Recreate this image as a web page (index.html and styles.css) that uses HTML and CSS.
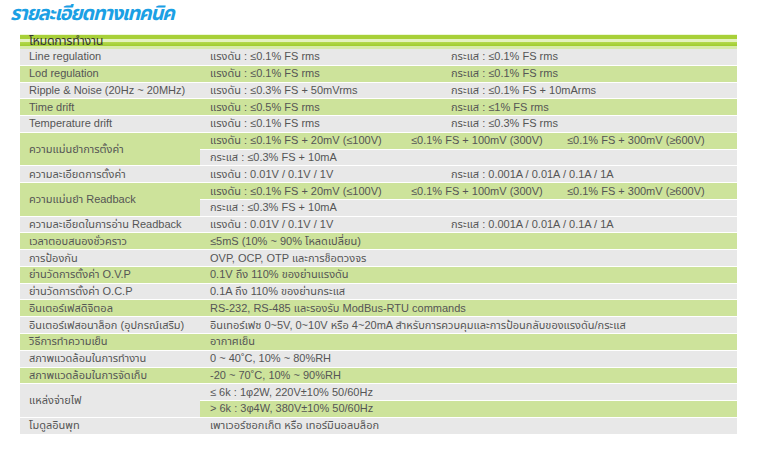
FILE: index.html
```html
<!DOCTYPE html>
<html lang="th">
<head>
<meta charset="utf-8">
<title>รายละเอียดทางเทคนิค</title>
<link rel="stylesheet" href="styles.css">
</head>
<body>
<h1 class="title">รายละเอียดทางเทคนิค</h1>
<div class="spec">
  <div class="head">โหมดการทำงาน</div>

  <div class="lbl w">Line regulation</div>
  <div class="val w"><span class="c1">แรงดัน : ≤0.1% FS rms</span><span>กระแส : ≤0.1% FS rms</span></div>

  <div class="lbl g">Lod regulation</div>
  <div class="val g"><span class="c1">แรงดัน : ≤0.1% FS rms</span><span>กระแส : ≤0.1% FS rms</span></div>

  <div class="lbl w">Ripple &amp; Noise (20Hz ~ 20MHz)</div>
  <div class="val w"><span class="c1">แรงดัน : ≤0.3% FS + 50mVrms</span><span>กระแส : ≤0.1% FS + 10mArms</span></div>

  <div class="lbl g">Time drift</div>
  <div class="val g"><span class="c1">แรงดัน : ≤0.5% FS rms</span><span>กระแส : ≤1% FS rms</span></div>

  <div class="lbl w">Temperature drift</div>
  <div class="val w"><span class="c1">แรงดัน : ≤0.1% FS rms</span><span>กระแส : ≤0.3% FS rms</span></div>

  <div class="lbl g span2">ความแม่นยำการตั้งค่า</div>
  <div class="val g"><span class="t1">แรงดัน : ≤0.1% FS + 20mV (≤100V)</span><span class="t2">≤0.1% FS + 100mV (300V)</span><span>≤0.1% FS + 300mV (≥600V)</span></div>
  <div class="val w">กระแส : ≤0.3% FS + 10mA</div>

  <div class="lbl w">ความละเอียดการตั้งค่า</div>
  <div class="val w"><span class="c1">แรงดัน : 0.01V / 0.1V / 1V</span><span>กระแส : 0.001A / 0.01A / 0.1A / 1A</span></div>

  <div class="lbl g span2">ความแม่นยำ Readback</div>
  <div class="val g"><span class="t1">แรงดัน : ≤0.1% FS + 20mV (≤100V)</span><span class="t2">≤0.1% FS + 100mV (300V)</span><span>≤0.1% FS + 300mV (≥600V)</span></div>
  <div class="val w">กระแส : ≤0.3% FS + 10mA</div>

  <div class="lbl w">ความละเอียดในการอ่าน Readback</div>
  <div class="val w"><span class="c1">แรงดัน : 0.01V / 0.1V / 1V</span><span>กระแส : 0.001A / 0.01A / 0.1A / 1A</span></div>

  <div class="lbl g">เวลาตอบสนองชั่วคราว</div>
  <div class="val g">≤5mS (10% ~ 90% โหลดเปลี่ยน)</div>

  <div class="lbl w">การป้องกัน</div>
  <div class="val w">OVP, OCP, OTP และการช็อตวงจร</div>

  <div class="lbl g">ย่านวัดการตั้งค่า O.V.P</div>
  <div class="val g">0.1V ถึง 110% ของย่านแรงดัน</div>

  <div class="lbl w">ย่านวัดการตั้งค่า O.C.P</div>
  <div class="val w">0.1A ถึง 110% ของย่านกระแส</div>

  <div class="lbl g">อินเตอร์เฟสดิจิตอล</div>
  <div class="val g">RS-232, RS-485 และรองรับ ModBus-RTU commands</div>

  <div class="lbl w">อินเตอร์เฟสอนาล็อก (อุปกรณ์เสริม)</div>
  <div class="val w">อินเทอร์เฟซ 0~5V, 0~10V หรือ 4~20mA สำหรับการควบคุมและการป้อนกลับของแรงดัน/กระแส</div>

  <div class="lbl g">วิธีการทำความเย็น</div>
  <div class="val g">อากาศเย็น</div>

  <div class="lbl w">สภาพแวดล้อมในการทำงาน</div>
  <div class="val w">0 ~ 40˚C, 10% ~ 80%RH</div>

  <div class="lbl g">สภาพแวดล้อมในการจัดเก็บ</div>
  <div class="val g">-20 ~ 70˚C, 10% ~ 90%RH</div>

  <div class="lbl w span2">แหล่งจ่ายไฟ</div>
  <div class="val w">≤ 6k : 1φ2W, 220V±10% 50/60Hz</div>
  <div class="val g">&gt; 6k : 3φ4W, 380V±10% 50/60Hz</div>

  <div class="lbl w">โมดูลอินพุท</div>
  <div class="val w">เพาเวอร์ซอกเก็ต หรือ เทอร์มินอลบล็อก</div>
</div>
</body>
</html>
```
FILE: styles.css
```css
html, body {
  margin: 0;
  padding: 0;
  background: #ffffff;
}
body {
  font-family: "Liberation Sans", "Noto Sans Thai", "Noto Sans", sans-serif;
  color: #555555;
}
.title {
  margin: 0;
  padding: 3px 0 0 10px;
  height: 34px;
  box-sizing: border-box;
  font-size: 20px;
  font-weight: bold;
  font-style: italic;
  letter-spacing: -1.3px;
  color: #1ba0e4;
  line-height: 20px;
}
.spec {
  margin-left: 20px;
  width: 717px;
  display: grid;
  grid-template-columns: 180px 537px;
  grid-auto-rows: 16.77px;
  grid-template-rows: 15px;
  font-size: 11px;
  line-height: 15px;
}
.head {
  grid-column: 1 / 3;
  padding-left: 9px;
  font-size: 12.5px;
  line-height: 14px;
  color: #333333;
  letter-spacing: -0.3px;
  background: linear-gradient(to bottom, #eef7d8 0, #eef7d8 1px, #a8d038 1px, #a8d038 5px, #e4f2bf 5px, #e4f2bf 8px, #b4d94e 8px, #9fcb2e 12px, #d7ebaa 12px, #d7ebaa 15px);
}
.lbl, .val {
  box-sizing: border-box;
  border-bottom: 1px solid #ffffff;
  white-space: nowrap;
  display: flex;
  align-items: center;
  overflow: hidden;
}
.lbl {
  grid-column: 1;
  padding-left: 9px;
}
.val {
  grid-column: 2;
  padding-left: 10px;
}
.span2 {
  grid-row: span 2;
}
.w { background: #e8e8e8; }
.g { background: #cde39b; }
.c1 {
  display: inline-block;
  width: 241px;
}
.t1 {
  display: inline-block;
  width: 201px;
}
.t2 {
  display: inline-block;
  width: 156px;
}
```
